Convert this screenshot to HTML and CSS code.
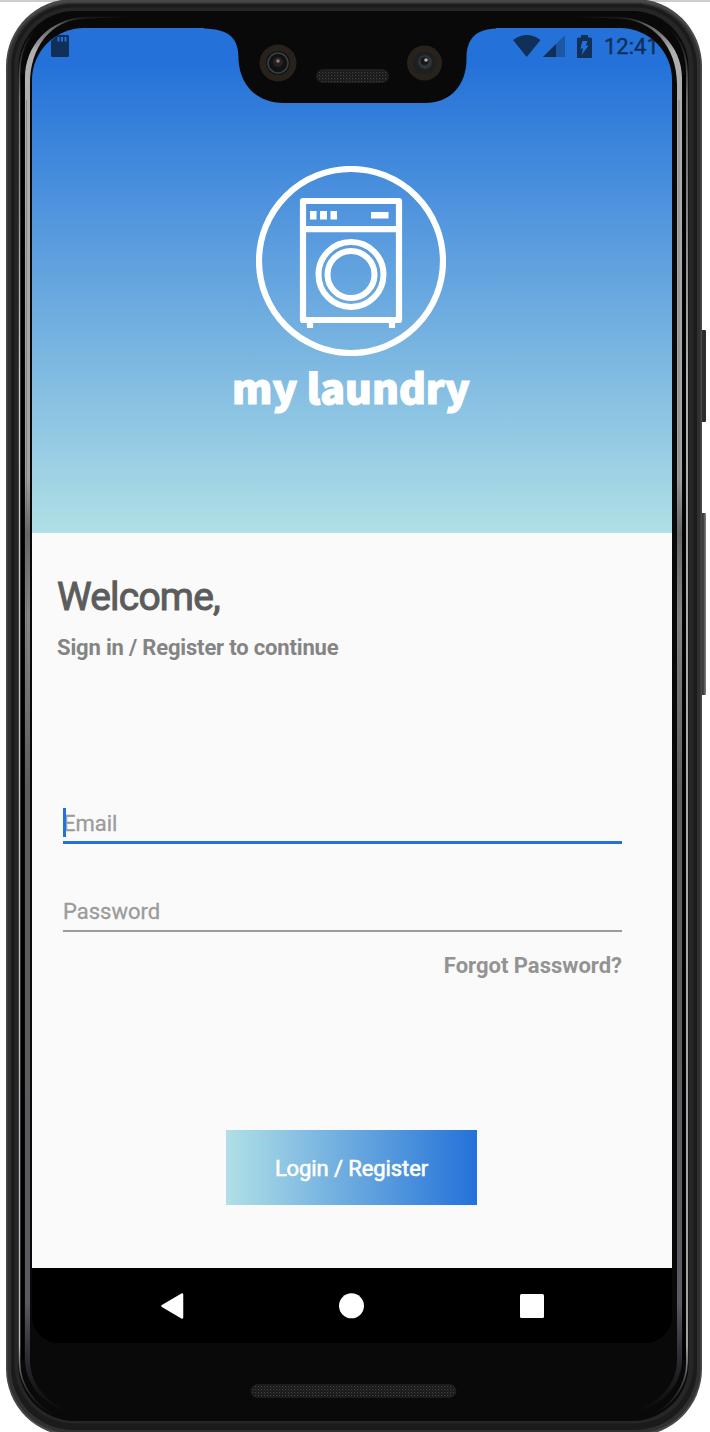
FILE: index.html
```html
<!DOCTYPE html>
<html lang="en">
<head>
<meta charset="utf-8">
<title>my laundry</title>
<link rel="stylesheet" href="styles.css">
</head>
<body>
<div class="phone">
  <svg class="frame" width="710" height="1432" viewBox="0 0 710 1432" fill="none">
    <defs>
      <linearGradient id="rail" gradientUnits="userSpaceOnUse" x1="0" y1="16" x2="0" y2="1414">
        <stop offset="0" stop-color="#999" stop-opacity="0"/>
        <stop offset=".006" stop-color="#999" stop-opacity=".6"/>
        <stop offset=".025" stop-color="#b0b0b0"/>
        <stop offset=".33" stop-color="#a0a0a0"/>
        <stop offset=".37" stop-color="#666"/>
        <stop offset=".43" stop-color="#858585"/>
        <stop offset=".55" stop-color="#5c5c5c"/>
        <stop offset=".92" stop-color="#5a5b60"/>
        <stop offset="1" stop-color="#445" stop-opacity="0"/>
      </linearGradient>
      <linearGradient id="line" gradientUnits="userSpaceOnUse" x1="0" y1="30" x2="0" y2="1415">
        <stop offset="0" stop-color="#777" stop-opacity="0"/>
        <stop offset=".05" stop-color="#777"/>
        <stop offset=".25" stop-color="#ccc"/>
        <stop offset=".95" stop-color="#bbb"/>
        <stop offset="1" stop-color="#555" stop-opacity="0"/>
      </linearGradient>
      <linearGradient id="key" x1="0" y1="0" x2="1" y2="0">
        <stop offset="0" stop-color="#222"/><stop offset=".6" stop-color="#444"/><stop offset="1" stop-color="#858585"/>
      </linearGradient>
      <pattern id="mesh" width="3" height="3" patternUnits="userSpaceOnUse">
        <rect width="3" height="3" fill="#161616"/><rect width="1.2" height="1.2" fill="#444"/><rect x="1.5" y="1.5" width="1" height="1" fill="#3a3a3a"/>
      </pattern>
    </defs>
    <rect width="710" height="2" fill="#cdcdcd"/>
    <rect x="700" y="330" width="6" height="92" rx="1" fill="#2d2d2b"/>
    <rect x="700" y="513" width="6" height="182" rx="1" fill="url(#key)"/>
    <rect x="6" y="-1" width="696" height="1437" rx="67" fill="#484848"/>
    <rect x="7.5" y="2.5" width="693" height="1431" rx="65" fill="#303030"/>
    <rect x="11" y="4" width="686" height="1426" rx="62" fill="#1b1b1b"/>
    <rect x="14.500" y="7.500" width="679" height="1416" rx="59" fill="#262626"/>
    <rect x="18.500" y="11" width="670" height="1410" rx="56" fill="#090909"/>
    <path d="M60 15C33 24 19.500 43 19.500 75V1362C19.500 1386 36 1408 58 1416" stroke="url(#line)" stroke-width="1.500"/>
    <path d="M646 15C673 24 687 43 687 75V1362C687 1386 671 1408 649 1416" stroke="url(#line)" stroke-width="1.700"/>
    <path d="M22.500 75V1360M684 75V1360" stroke="#000" stroke-width="3"/>
    <path d="M140 16.500H86C48 19 25 46 25 78V1360C26 1390 51 1414 88 1414C52 1411 30 1388 30 1360V84C30 47 51 19 86 18.500Z" fill="url(#rail)"/>
    <path d="M565 16.500H618C656 19 682 46 682 78V1360C681 1390 656 1414 617 1414C653 1411 677 1388 677 1360V84C677 47 653 19 618 18.500Z" fill="url(#rail)"/>
    <path d="M26.500 100V700M679 100V700" stroke="#686868" stroke-opacity=".5"/>
    <rect x="250.500" y="1384" width="206" height="14" rx="7" fill="#1c1c1c"/>
    <rect x="252" y="1385.500" width="203" height="11" rx="5.500" fill="url(#mesh)"/>
  </svg>

  <main class="screen">
    <section class="hero">
      <div class="status">
        <svg class="sd" width="18" height="22" viewBox="0 0 18 22"><path fill="#102f59" fill-rule="evenodd" d="M6 0H16.500Q18 0 18 1.500V20.500Q18 22 16.500 22H1.500Q0 22 0 20.500V6ZM6.500 2V6.500H8.500V2ZM10 2V6.500H12V2ZM13.500 2V6.500H15.500V2Z"/></svg>
        <svg class="wifi" width="28" height="22" viewBox="0 0 28 22"><path fill="#102f59" d="M0 5Q14-5 27.500 5L13.700 22Z"/></svg>
        <svg class="cell" width="22" height="22" viewBox="0 0 22 22"><path fill="#1c57a3" d="M22 0V22H0Z"/><path fill="#102f59" d="M13 9V22H0Z"/></svg>
        <svg class="battery" width="15" height="23" viewBox="0 0 15 23"><path fill="#102f59" d="M4 0H11V2.500H13.500Q15 2.500 15 4V23H0V4Q0 2.500 1.500 2.500H4Z"/><path fill="#2472d9" d="M5.500 6H10.500L8.800 10.500H11.700L4.500 20L6.200 13.500H3.500Z"/></svg>
        <span class="time">12:41</span>
      </div>
      <div class="brand">
        <svg class="logo" width="190" height="190" viewBox="0 0 190 190" fill="none" stroke="#fff">
          <circle cx="95" cy="95" r="92" stroke-width="6.200"/>
          <rect x="47" y="35" width="96" height="119" stroke-width="6.200" stroke-linejoin="round"/>
          <path d="M47 63.200H143" stroke-width="6.200"/>
          <circle cx="95" cy="108.500" r="32.500" stroke-width="6"/>
          <circle cx="95" cy="108.500" r="23.500" stroke-width="6"/>
          <path d="M54 49.200h6.500M64 49.200h7M74.500 49.200h6.500" stroke-width="8.500"/>
          <path d="M115 49.200h17.500" stroke-width="6.500"/>
          <path d="M54 156v6M136 156v6" stroke-width="6.200"/>
        </svg>
        <h1 class="name">my laundry</h1>
      </div>
    </section>

    <section class="form">
      <h2 class="welcome">Welcome,</h2>
      <p class="lead">Sign in / Register to continue</p>
      <div class="field field-active"><span class="caret"></span><span class="hint">Email</span></div>
      <div class="field"><span class="hint">Password</span></div>
      <a class="forgot">Forgot Password?</a>
      <div class="submit"><span class="submit-text">Login / Register</span></div>
    </section>

    <nav class="nav">
      <svg width="23" height="26" viewBox="0 0 23 26"><path fill="#fff" stroke="#fff" stroke-width="2.500" stroke-linejoin="round" d="M21 1.500V24.500L1.500 13Z"/></svg>
      <svg width="26" height="26" viewBox="0 0 26 26"><circle cx="12.500" cy="12.800" r="12.500" fill="#fff"/></svg>
      <svg width="24" height="24" viewBox="0 0 24 24"><rect width="24" height="24" rx="1.500" fill="#fff"/></svg>
    </nav>
  </main>

  <svg class="notch" width="270" height="80" viewBox="0 0 270 80">
    <path fill="#090909" d="M-16 0H276V4.500C256 5 246.500 15 246.500 34V36C246 62 230 79 205 79H63C38 79 20 62 18.500 36V34C18.500 15 10 5 -16 4.500Z"/>
    <circle cx="58" cy="39" r="18.500" fill="#28221c"/><circle cx="58" cy="39" r="12" fill="#101313"/><circle cx="58" cy="39" r="10" fill="none" stroke="#3c4141" stroke-width="1.500"/><circle cx="58" cy="38" r="5" fill="#272120"/><circle cx="58" cy="37" r="1.800" fill="#8f7c78"/>
    <circle cx="204.500" cy="39" r="17.500" fill="#28221c"/><circle cx="204.500" cy="39" r="11.500" fill="#1c2021"/><circle cx="205" cy="38" r="7" fill="#303435"/><circle cx="204.500" cy="37" r="4" fill="#14171b"/><circle cx="206" cy="36" r="1.800" fill="#b0afa7"/>
    <rect x="96" y="45" width="73" height="14" rx="7" fill="#1e1e1e"/>
    <rect x="97" y="46" width="71" height="12" rx="6" fill="url(#mesh)"/>
  </svg>
</div>
</body>
</html>
```
FILE: styles.css
```css
* { box-sizing: border-box; }

body {
  margin: 0;
  background: #fff;
  font-family: Roboto, "Noto Sans", sans-serif;
}

h1, h2, p { margin: 0; }
svg { display: block; }

.phone {
  position: relative;
  width: 710px;
  height: 1432px;
  padding: 28px 38px 0 32px;
  overflow: hidden;
}

.frame { position: absolute; left: 0; top: 0; }

/* camera cutout laid over the top of the display */
.notch {
  position: absolute;
  left: 220px;
  top: 24px;
  overflow: visible;
}

.screen {
  position: relative;
  display: flex;
  flex-direction: column;
  height: 1315px;
  border-radius: 52px 52px 27px 27px;
  overflow: hidden;
  background: #000;
}

.hero {
  height: 505px;
  background: linear-gradient(#2472d9 36px, #b0e0e6 100%);
}

.status {
  display: flex;
  align-items: center;
  height: 36px;
  padding: 0 12px 0 19px;
}

.wifi { margin-left: 444px; }
.cell { margin-left: 2px; }
.battery { margin-left: 12px; }

.time {
  margin-left: 12px;
  padding-top: 2px;
  font-size: 22px;
  line-height: 34px;
  color: #102f59;
  -webkit-text-stroke: 0.4px #102f59;
}

.brand {
  display: flex;
  flex-direction: column;
  align-items: center;
  padding: 102px 2px 0 0;
}

.name {
  margin-top: -2px;
  font-family: "Noto Sans CJK SC", "Noto Sans", sans-serif;
  font-size: 41px;
  font-weight: 900;
  line-height: 64px;
  color: #fff;
  white-space: nowrap;
  -webkit-text-stroke: 1.2px #fff;
}

.form {
  display: flex;
  flex-direction: column;
  height: 735px;
  padding: 40px 50px 0 25px;
  background: #fafafa;
}

.welcome {
  font-size: 39px;
  font-weight: 400;
  letter-spacing: -0.8px;
  line-height: 48px;
  color: #5c5c5c;
  -webkit-text-stroke: 1px #5c5c5c;
}

.lead {
  margin-top: 12px;
  font-size: 22px;
  font-weight: 700;
  letter-spacing: -0.17px;
  line-height: 30px;
  color: #848484;
}

.field {
  display: flex;
  align-items: center;
  position: relative;
  height: 38px;
  margin: 50px 0 0 6px;
  padding-bottom: 2px;
  border-bottom: 2px solid #9b9b9b;
  font-size: 22px;
  color: #9b9b9b;
  -webkit-text-stroke: 0.3px #9b9b9b;
}

.field-active {
  height: 38px;
  margin-top: 143px;
  padding-bottom: 1px;
  border-bottom: 3px solid #2472d9;
}

.caret {
  position: absolute;
  left: 0;
  top: 2px;
  width: 3px;
  height: 29px;
  background: #2472d9;
}

.forgot {
  align-self: flex-end;
  margin-top: 19px;
  font-size: 22px;
  font-weight: 700;
  line-height: 30px;
  color: #939393;
}

.submit {
  display: flex;
  align-items: center;
  justify-content: center;
  width: 251px;
  height: 75px;
  margin: 149px 0 0 169px;
  padding-top: 1px;
  background: linear-gradient(90deg, #b0e0e6, #2472d9);
  font-size: 22px;
  font-weight: 400;
  letter-spacing: -0.1px;
  color: #fff;
  -webkit-text-stroke: 0.6px #fff;
}

.nav {
  display: flex;
  align-items: center;
  justify-content: space-between;
  height: 75px;
  padding: 0 128px 0 129px;
  background: #000;
}
```
